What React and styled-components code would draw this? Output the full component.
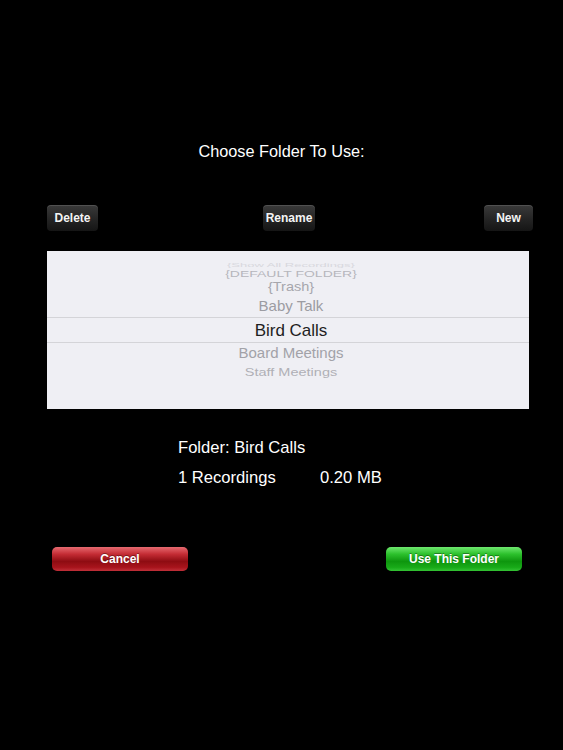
import React from 'react';
import styled, { createGlobalStyle } from 'styled-components';

const GlobalStyle = createGlobalStyle`
    html, body {
        margin: 0;
        padding: 0;
        background: #000000;
    }
    body {
        font-family: "Liberation Sans", Arial, sans-serif;
    }
`;

const Screen = styled.div`
    width: 563px;
    height: 750px;
    background: #000000;
    display: flex;
    flex-direction: column;
    overflow: hidden;
`;

const Title = styled.div`
    margin-top: 141px;
    height: 20px;
    line-height: 20px;
    text-align: center;
    font-size: 16.3px;
    color: #ffffff;
`;

const ToolRow = styled.div`
    margin-top: 44px;
    display: grid;
    grid-template-columns: 1fr auto 1fr;
    align-items: center;
    padding: 0 30px 0 47px;
`;

const ToolButton = styled.button`
    width: ${(p) => p.w}px;
    height: 26px;
    padding: 0;
    border: none;
    border-radius: 4px;
    justify-self: ${(p) => p.align || 'center'};
    margin-left: ${(p) => p.shift || 0}px;
    background: linear-gradient(#3a3a3a, #262626 50%, #151515);
    box-shadow: inset 0 1px 0 rgba(255, 255, 255, 0.12);
    color: #f4f4f4;
    font-family: "Liberation Sans", Arial, sans-serif;
    font-weight: bold;
    font-size: 12px;
`;

const Picker = styled.div`
    margin: 20px 0 0 47px;
    width: 482px;
    height: 158px;
    background: #efeff4;
    display: flex;
    flex-direction: column;
    padding-top: 10px;
    box-sizing: border-box;
    overflow: hidden;
`;

const PickerItem = styled.div`
    height: ${(p) => p.h}px;
    line-height: ${(p) => p.h}px;
    flex-shrink: 0;
    text-align: center;
    padding-left: 6px;
    font-size: ${(p) => p.size}px;
    color: ${(p) => p.color};
    white-space: nowrap;
    transform: scaleY(${(p) => p.squash || 1});
    ${(p) =>
        p.selected &&
        `
        border-top: 1px solid #d4d4d8;
        border-bottom: 1px solid #d4d4d8;
        box-sizing: border-box;
    `}
`;

const Info = styled.div`
    margin: 29px 0 0 178px;
    display: flex;
    flex-direction: column;
    gap: 10px;
    color: #ffffff;
    font-size: 16.6px;
`;

const InfoLine = styled.div`
    height: 20px;
    line-height: 20px;
    display: flex;
`;

const Count = styled.span`
    width: 142px;
`;

const ActionRow = styled.div`
    margin-top: 59px;
    display: flex;
    justify-content: space-between;
    padding: 0 41px 0 52px;
`;

const ActionButton = styled.button`
    width: 136px;
    height: 24px;
    padding: 0;
    border: none;
    border-radius: 5px;
    color: #ffffff;
    font-family: "Liberation Sans", Arial, sans-serif;
    font-weight: bold;
    font-size: 12px;
    text-shadow: 0 -1px 0 rgba(0, 0, 0, 0.35);
    background: ${(p) =>
        p.tone === 'green'
            ? 'linear-gradient(#6ee86e, #2cc02c 30%, #0e960e 60%, #18aa18 85%, #34c234)'
            : 'linear-gradient(#e66a70, #c42c34 30%, #8e0c12 60%, #a8141c 85%, #c0303a)'};
`;

const items = [
    { label: '{Show All Recordings}', h: 8, size: 13, color: '#d8d8de', squash: 0.4 },
    { label: '{DEFAULT FOLDER}', h: 10, size: 14, color: '#b6b6bc', squash: 0.62 },
    { label: '{Trash}', h: 16, size: 14.5, color: '#a6a6ac', squash: 0.85 },
    { label: 'Baby Talk', h: 22, size: 15, color: '#9c9ca2' },
    { label: 'Bird Calls', h: 26, size: 17, color: '#1e1e22', selected: true },
    { label: 'Board Meetings', h: 20, size: 15, color: '#a2a2a8' },
    { label: 'Staff Meetings', h: 18, size: 14.5, color: '#b0b0b6', squash: 0.8 },
];

const App = () => {
    return (
        <Screen>
            <GlobalStyle />
            <Title>Choose Folder To Use:</Title>
            <ToolRow>
                <ToolButton w={51} align="start">Delete</ToolButton>
                <ToolButton w={52} shift={-2}>Rename</ToolButton>
                <ToolButton w={49} align="end">New</ToolButton>
            </ToolRow>
            <Picker>
                {items.map((item) => (
                    <PickerItem
                        key={item.label}
                        h={item.h}
                        size={item.size}
                        color={item.color}
                        squash={item.squash}
                        selected={item.selected}
                    >
                        {item.label}
                    </PickerItem>
                ))}
            </Picker>
            <Info>
                <InfoLine>Folder: Bird Calls</InfoLine>
                <InfoLine>
                    <Count>1 Recordings</Count>
                    <span>0.20 MB</span>
                </InfoLine>
            </Info>
            <ActionRow>
                <ActionButton tone="red">Cancel</ActionButton>
                <ActionButton tone="green">Use This Folder</ActionButton>
            </ActionRow>
        </Screen>
    );
};

export default App;
